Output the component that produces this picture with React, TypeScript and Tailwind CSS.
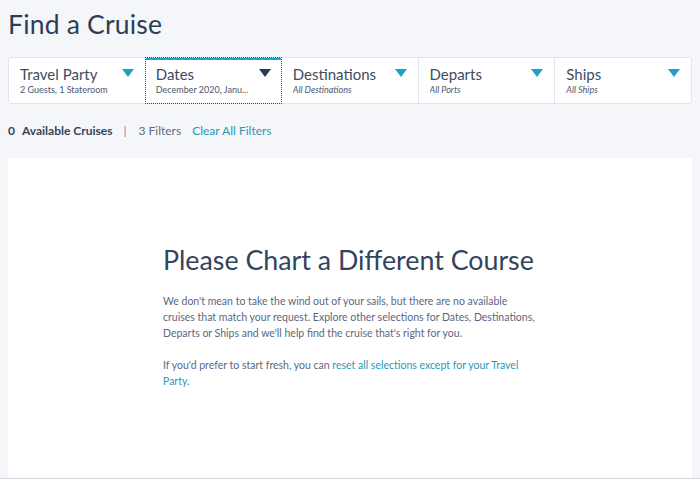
const filters = [
  { label: 'Travel Party', value: '2 Guests, 1 Stateroom', italic: false },
  { label: 'Dates', value: 'December 2020, Janu...', italic: false, active: true },
  { label: 'Destinations', value: 'All Destinations', italic: true },
  { label: 'Departs', value: 'All Ports', italic: true },
  { label: 'Ships', value: 'All Ships', italic: true },
]

function Caret({ dark }: { dark?: boolean }) {
  return (
    <svg width="12" height="9" viewBox="0 0 12 9" className="shrink-0 mt-[4px]">
      <path d="M0 0h12L6 8z" fill={dark ? '#2b3a50' : '#1ea1c5'} />
    </svg>
  )
}

export default function App() {
  return (
    <div className="h-[487px] bg-[#f5f6fa] font-['Lato','Open_Sans',sans-serif] text-[#34445c] flex flex-col overflow-hidden">
      <div className="px-2 flex-1 flex flex-col min-h-0">
        <h1 className="text-[26.5px] leading-[34px] pt-[7px] text-[#2e3d55] font-normal tracking-[0.2px]">Find a Cruise</h1>
        <div className="mt-[16px] h-[47px] bg-white border border-[#e1e4ea] rounded-[3px] flex">
          {filters.map((f, i) => (
            <div
              key={f.label}
              className={
                f.active
                  ? 'w-[137px] border border-dotted border-[#4a4a4a] -my-px flex flex-col'
                  : `flex-1 px-[11px] pt-[7px] flex flex-col ${i > 0 && !filters[i - 1].active ? 'border-l border-[#e1e4ea]' : ''}`
              }
            >
              {f.active && <div className="h-[2px] bg-[#1ea1c5] shrink-0" />}
              <div className={f.active ? 'px-[10px] pt-[5px] flex flex-col' : 'flex flex-col'}>
                <div className="flex items-start justify-between">
                  <span className="text-[15px] leading-[18px] text-[#3e4c63]">{f.label}</span>
                  <Caret dark={f.active} />
                </div>
                <span className={`text-[9px] leading-[12px] mt-[1px] text-[#4b5870] truncate ${f.italic ? 'italic' : ''}`}>
                  {f.value}
                </span>
              </div>
            </div>
          ))}
        </div>
        <div className="mt-[19px] flex items-center text-[12px] leading-[15px]">
          <span className="font-bold text-[#34445c]">0</span>
          <span className="font-bold text-[#34445c] ml-[7px]">Available Cruises</span>
          <span className="ml-[11px] mr-[12px] text-[#7a8599]">|</span>
          <span className="text-[#5d6a80]">3 Filters</span>
          <span className="ml-[11px] text-[#2a98b7]">Clear All Filters</span>
        </div>
        <div className="mt-[20px] flex-1 bg-white">
          <div className="pl-[155px] pt-[86px] w-[530px]">
            <h2 className="text-[26.8px] leading-[32px] text-[#34445c] font-normal whitespace-nowrap">Please Chart a Different Course</h2>
            <p className="mt-[17px] text-[10.5px] leading-[16px] text-[#5b6880]">
              We don't mean to take the wind out of your sails, but there are no available cruises that match your request. Explore other selections for Dates, Destinations, Departs or Ships and we'll help find the cruise that's right for you.
            </p>
            <p className="mt-[16px] text-[10.5px] leading-[16px] text-[#5b6880]">
              If you'd prefer to start fresh, you can <a className="text-[#2a98b7]">reset all selections except for your Travel</a>{' '}
              <a className="text-[#2a98b7]">Party</a>.
            </p>
          </div>
        </div>
      </div>
      <div className="h-[9px] border-t border-[#d3d8e0] bg-white shrink-0" />
    </div>
  )
}
